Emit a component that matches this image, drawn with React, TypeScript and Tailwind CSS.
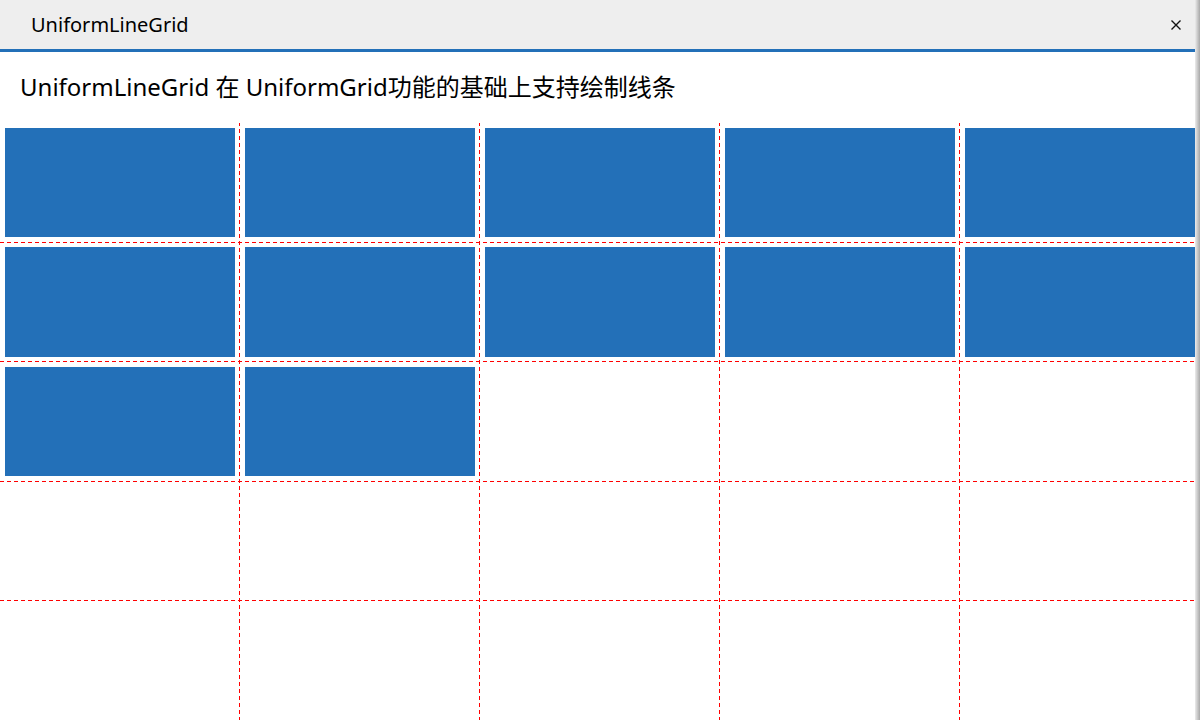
import React from "react";

const font = '"Noto Sans", "Noto Sans CJK SC", sans-serif';

export default function App() {
  const cells = Array.from({ length: 25 }, (_, i) => i);
  const vx = [239.5, 479.5, 719.5, 959.5];
  const hy = [119.5, 238.5, 358.5, 477.5];
  return (
    <div
      className="relative w-[1200px] h-[720px] overflow-hidden bg-white"
      style={{ fontFamily: font }}
    >
      <div className="flex h-[52px] items-center justify-between bg-[#eeeeee] border-b-[3px] border-[#2370b8] pl-[31px] pr-[18px]">
        <span className="text-[20px] text-black leading-none">UniformLineGrid</span>
        <svg width="12" height="12" viewBox="0 0 12 12">
          <path d="M1.5 1.5 L10.5 10.5 M10.5 1.5 L1.5 10.5" stroke="#111" strokeWidth="1.4" />
        </svg>
      </div>
      <div className="flex h-[71px] items-center pl-[20px] pb-[2px]">
        <span className="text-[24px] text-black leading-none">
          UniformLineGrid 在 UniformGrid功能的基础上支持绘制线条
        </span>
      </div>
      <div className="relative grid h-[597px] w-[1200px] grid-cols-5 grid-rows-5">
        {cells.map((i) => (
          <div key={i} className="p-[5px]">
            {i < 12 ? <div className="h-full w-full bg-[#2370b8]" /> : null}
          </div>
        ))}
        <svg
          className="pointer-events-none absolute left-0 top-0"
          width="1200"
          height="597"
          viewBox="0 0 1200 597"
        >
          {vx.map((x) => (
            <line key={"v" + x} x1={x} y1={-1} x2={x} y2={597} stroke="#ff0000" strokeWidth="1" strokeDasharray="4 3" />
          ))}
          {hy.map((y) => (
            <line key={"h" + y} x1={0} y1={y} x2={1200} y2={y} stroke="#ff0000" strokeWidth="1" strokeDasharray="4 3" />
          ))}
        </svg>
      </div>
      <div className="absolute right-0 top-0 h-full w-[5px] bg-gradient-to-r from-[#ececec] to-[#a8a8a8]" />
    </div>
  );
}
